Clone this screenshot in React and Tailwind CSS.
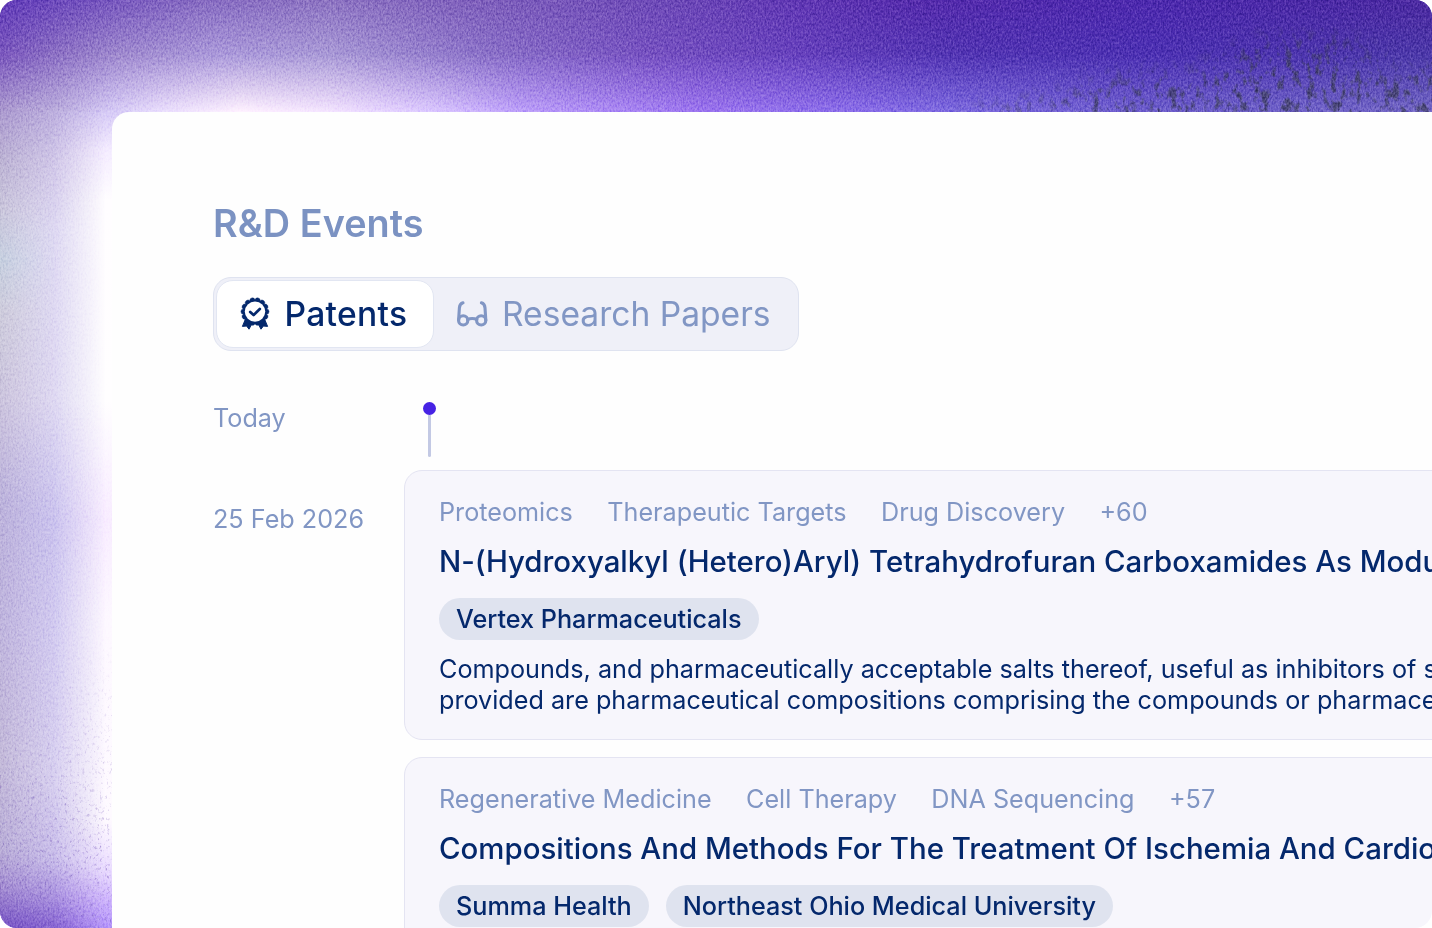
const topRow = [[0,'#5f38b8'],[100,'#7250bc'],[200,'#8468c0'],[330,'#8a70c0'],[480,'#7c5cba'],[650,'#6c48b6'],[800,'#5e34b2'],[920,'#5228aa'],[1150,'#4a26ac'],[1432,'#48269e']];
const midRow = [[0,'#7854bc'],[60,'#8c70c4'],[120,'#9e88ce'],[220,'#aa98da'],[330,'#a898d6'],[480,'#8a70c8'],[650,'#744ec0'],[800,'#643ebc'],[950,'#5032b2'],[1150,'#4a2eb2'],[1432,'#4a36a8']];
const lowRow = [[0,'#aa98ce'],[60,'#bcaede'],[112,'#d6caf6'],[160,'#eadefd'],[240,'#fff2ff'],[330,'#f4e4ff'],[430,'#dcc8ff'],[520,'#bc9efa'],[700,'#9c74f0'],[850,'#8a6cea'],[950,'#7c68e0'],[1150,'#6c5ccc'],[1432,'#7064c4']];
const leftCol = [[112,'#aa98ce'],[160,'#bab0d2'],[210,'#c8c4da'],[260,'#c4cede'],[310,'#cccada'],[400,'#cac2dc'],[500,'#bab0da'],[620,'#bdb2dc'],[760,'#c2b8d8'],[850,'#b8acd6'],[890,'#a088d0'],[928,'#7450c2']];
const midCol = [[112,'#bcaede'],[160,'#d0c6e8'],[230,'#ded8f2'],[400,'#ded8f2'],[520,'#cac2ee'],[640,'#d2caf0'],[780,'#d8d0f0'],[860,'#c8bcea'],[900,'#a68cde'],[928,'#8662d2']];
const rightCol = [[112,'#d6caf6'],[150,'#f4ecff'],[200,'#fffdff'],[400,'#fffeff'],[520,'#f8ecff'],[620,'#fdf8ff'],[820,'#fefaff'],[870,'#eadcff'],[900,'#ceb4fc'],[928,'#b494fa']];

function HGrad({ id, stops }) {
  return (
    <linearGradient id={id} gradientUnits="userSpaceOnUse" x1="0" y1="0" x2="1432" y2="0">
      {stops.map(([o, c]) => <stop key={o} offset={o / 1432} stopColor={c} />)}
    </linearGradient>
  );
}
function VGrad({ id, stops }) {
  return (
    <linearGradient id={id} gradientUnits="userSpaceOnUse" x1="0" y1="0" x2="0" y2="928">
      {stops.map(([o, c]) => <stop key={o} offset={o / 928} stopColor={c} />)}
    </linearGradient>
  );
}
function Fade({ id, x1 = 0, y1 = 0, x2 = 0, y2 = 0 }) {
  return (
    <>
      <linearGradient id={id + 'g'} gradientUnits="userSpaceOnUse" x1={x1} y1={y1} x2={x2} y2={y2}>
        <stop offset="0" stopColor="#fff" />
        <stop offset="1" stopColor="#fff" stopOpacity="0" />
      </linearGradient>
      <mask id={id} maskUnits="userSpaceOnUse" x="0" y="0" width="1432" height="928" className="[mask-type:alpha]">
        <rect width="1432" height="928" fill={`url(#${id}g)`} />
      </mask>
    </>
  );
}

function Backdrop() {
  return (
    <svg className="absolute inset-0" width="1432" height="928" viewBox="0 0 1432 928" aria-hidden="true">
      <defs>
        <HGrad id="t0" stops={topRow} />
        <HGrad id="t1" stops={midRow} />
        <HGrad id="t2" stops={lowRow} />
        <VGrad id="l0" stops={leftCol} />
        <VGrad id="l1" stops={midCol} />
        <VGrad id="l2" stops={rightCol} />
        <Fade id="my0" y2={55} />
        <Fade id="my1" y1={55} y2={112} />
        <Fade id="mx0" x2={55} />
        <Fade id="mx1" x1={55} x2={106} />
        <filter id="grain" x="0" y="0" width="100%" height="100%" colorInterpolationFilters="sRGB">
          <feTurbulence type="fractalNoise" baseFrequency="0.6 0.38" numOctaves="2" seed="4" />
          <feColorMatrix values="1.5 0 0 0 -0.2  1.5 0 0 0 -0.2  1.5 0 0 0 -0.2  0 0 0 0 1" />
        </filter>
        <filter id="specks" x="0" y="0" width="100%" height="100%" colorInterpolationFilters="sRGB">
          <feTurbulence type="fractalNoise" baseFrequency="0.4 0.28" numOctaves="3" seed="11" />
          <feColorMatrix values="0 0 0 0 0.42  0 0 0 0 0.3  0 0 0 0 0.7  4 0 0 0 -2.35" />
        </filter>
        <filter id="grass" x="0" y="0" width="100%" height="100%" colorInterpolationFilters="sRGB">
          <feTurbulence type="fractalNoise" baseFrequency="0.13 0.08" numOctaves="5" seed="31" />
          <feColorMatrix values="0 0 0 0 0.24  0 0 0 0 0.24  0 0 0 0 0.38  5 0 0 0 -2.6" />
        </filter>
        <filter id="soft"><feGaussianBlur stdDeviation="13" /></filter>
        <mask id="gm" maskUnits="userSpaceOnUse" x="920" y="0" width="512" height="112">
          <path d="M930 170 L980 112 L1060 100 L1100 80 L1190 76 L1262 42 L1340 40 L1400 72 L1460 62 V170Z" fill="#ccc" filter="url(#soft)" />
        </mask>
        <linearGradient id="sg" x1="0" y1="0" x2="0" y2="1">
          <stop offset="0.1" stopColor="#000" /><stop offset="0.85" stopColor="#fff" />
        </linearGradient>
        <mask id="sm" maskUnits="userSpaceOnUse" x="0" y="600" width="130" height="328">
          <rect y="600" width="130" height="328" fill="url(#sg)" />
        </mask>
      </defs>
      <rect width="1432" height="112" fill="url(#t2)" />
      <rect width="1432" height="112" fill="url(#t1)" mask="url(#my1)" />
      <rect width="1432" height="112" fill="url(#t0)" mask="url(#my0)" />
      <rect y="112" width="130" height="816" fill="url(#l2)" />
      <rect y="112" width="130" height="816" fill="url(#l1)" mask="url(#mx1)" />
      <rect y="112" width="130" height="816" fill="url(#l0)" mask="url(#mx0)" />
      <g mask="url(#gm)"><rect x="920" width="512" height="112" filter="url(#grass)" /></g>
      <g mask="url(#sm)"><rect y="600" width="130" height="328" filter="url(#specks)" opacity="0.4" /></g>
      <rect className="mix-blend-soft-light" width="1432" height="112" filter="url(#grain)" opacity="0.5" />
      <rect className="mix-blend-soft-light" y="112" width="130" height="816" filter="url(#grain)" opacity="0.45" />
    </svg>
  );
}

function PatentIcon() {
  const n = 14;
  const pt = (i) => {
    const a = (i * 2 * Math.PI) / n;
    return `${(15 + 11.9 * Math.sin(a)).toFixed(2)} ${(14.6 - 11.9 * Math.cos(a)).toFixed(2)}`;
  };
  const d = `M${pt(0)}` + Array.from({ length: n }, (_, i) => `A2.66 2.66 0 0 1 ${pt(i + 1)}`).join('') + 'Z';
  return (
    <svg className="shrink-0" width="30" height="34" viewBox="0 0 30 34" fill="none" stroke="currentColor" strokeLinejoin="round" strokeLinecap="round">
      <path d="M5.5 22 2.4 29.4 6.6 29 9 32.2 12 26.5H18L21 32.2 23.4 29 27.6 29.4 24.5 22 15 26Z" fill="currentColor" strokeWidth="1" />
      <path d={d} fill="currentColor" strokeWidth="0.5" />
      <circle cx="15" cy="14.6" r="10.2" fill="white" stroke="none" />
      <path d="m10.2 14.9 3.4 3.2 6.2-6.1" strokeWidth="2.7" />
    </svg>
  );
}

function GlassesIcon() {
  return (
    <svg className="shrink-0" width="32" height="28" viewBox="0 0 32 28" fill="none" stroke="currentColor" strokeWidth="3.1" strokeLinecap="round" strokeLinejoin="round">
      <circle cx="7.2" cy="20.4" r="4.6" />
      <circle cx="25.2" cy="20.4" r="4.6" />
      <path d="M11.6 19.6c2.4-1.4 6.8-1.4 9.2 0M2.6 20.2 3.4 7.8C3.6 5.2 4.8 3.4 7 2.8M29.8 20.2 29 7.8C28.8 5.2 27.6 3.4 25.4 2.8" />
    </svg>
  );
}

function EventCard({ topics, title, orgs, children }) {
  return (
    <article className="h-[270px] w-[1300px] shrink-0 rounded-[18px] border-[1.5px] border-[#e4e4f2] bg-[#f7f6fc] pl-[34px] pt-[24px]">
      <div className="flex h-[36px] items-center gap-[34.4px] text-[25.2px] text-[#8196c4]">
        {topics.map((t) => <span key={t}>{t}</span>)}
      </div>
      <h2 className="mt-[11px] h-[40px] text-[29.4px] leading-[40px] font-medium tracking-[0.02px]">{title}</h2>
      <div className="mt-[16px] flex gap-[17px]">
        {orgs.map((o) => (
          <span key={o} className="flex h-[42px] items-center rounded-full bg-[#dfe3ef] px-[17px] pt-[2px] text-[25.2px] font-medium">{o}</span>
        ))}
      </div>
      <p className="mt-[14px] text-[25.2px] leading-[31px]">{children}</p>
    </article>
  );
}

export default function App() {
  return (
    <div className="h-[928px] w-[1432px] overflow-hidden bg-white">
      <div className="relative h-[928px] w-[1432px] overflow-hidden rounded-[17px] pl-[112px] pt-[112px] font-['Inter',sans-serif] whitespace-nowrap text-[#04286c]">
        <Backdrop />
        <main className="relative h-[816px] w-[1320px] overflow-hidden rounded-tl-[17px] bg-[#fefefe] pl-[101px] pt-[87px]">
          <h1 className="h-[48px] text-[37.8px] leading-[48px] font-semibold tracking-[0.05px] text-[#7b92c2]">R&amp;D Events</h1>
          <div className="mt-[30px] flex h-[74px] w-[586px] rounded-[18px] border-[1.5px] border-[#dfe3f0] bg-[#eff0f8] p-[1.5px]">
            <div className="flex h-[68px] w-[218px] items-center gap-[15px] rounded-[17px] border border-[#e2e6f2] bg-white pl-[23px] text-[33.6px] font-medium tracking-[0.3px]">
              <PatentIcon />
              <span className="pt-[2px]">Patents</span>
            </div>
            <div className="flex items-center gap-[14px] pl-[22.5px] text-[33.6px] text-[#8196c4]">
              <GlassesIcon />
              <span className="pt-px">Research Papers</span>
            </div>
          </div>
          <div className="mt-[49px] flex h-[69.5px] text-[25.2px] text-[#8196c4]">
            <div className="w-[210px] pt-px leading-[34px]">Today</div>
            <div className="flex w-[13px] flex-col items-center pt-[2px]">
              <span className="size-[13px] rounded-full bg-[#4622e4]" />
              <span className="h-[42px] w-[2.5px] rounded-b-full bg-[#c3c9e4]" />
            </div>
          </div>
          <div className="flex">
            <div className="w-[191px] shrink-0 pt-[32.5px] text-[25.2px] leading-[34px] text-[#8196c4]">25 Feb 2026</div>
            <div className="flex flex-col gap-[17px]">
              <EventCard topics={['Proteomics', 'Therapeutic Targets', 'Drug Discovery', '+60']} title="N-(Hydroxyalkyl (Hetero)Aryl) Tetrahydrofuran Carboxamides As Modulators" orgs={['Vertex Pharmaceuticals']}>
                Compounds, and pharmaceutically acceptable salts thereof, useful as inhibitors of sodium<br />
                provided are pharmaceutical compositions comprising the compounds or pharmaceutically
              </EventCard>
              <EventCard topics={['Regenerative Medicine', 'Cell Therapy', 'DNA Sequencing', '+57']} title="Compositions And Methods For The Treatment Of Ischemia And Cardiovascular" orgs={['Summa Health', 'Northeast Ohio Medical University']} />
            </div>
          </div>
        </main>
      </div>
    </div>
  );
}
